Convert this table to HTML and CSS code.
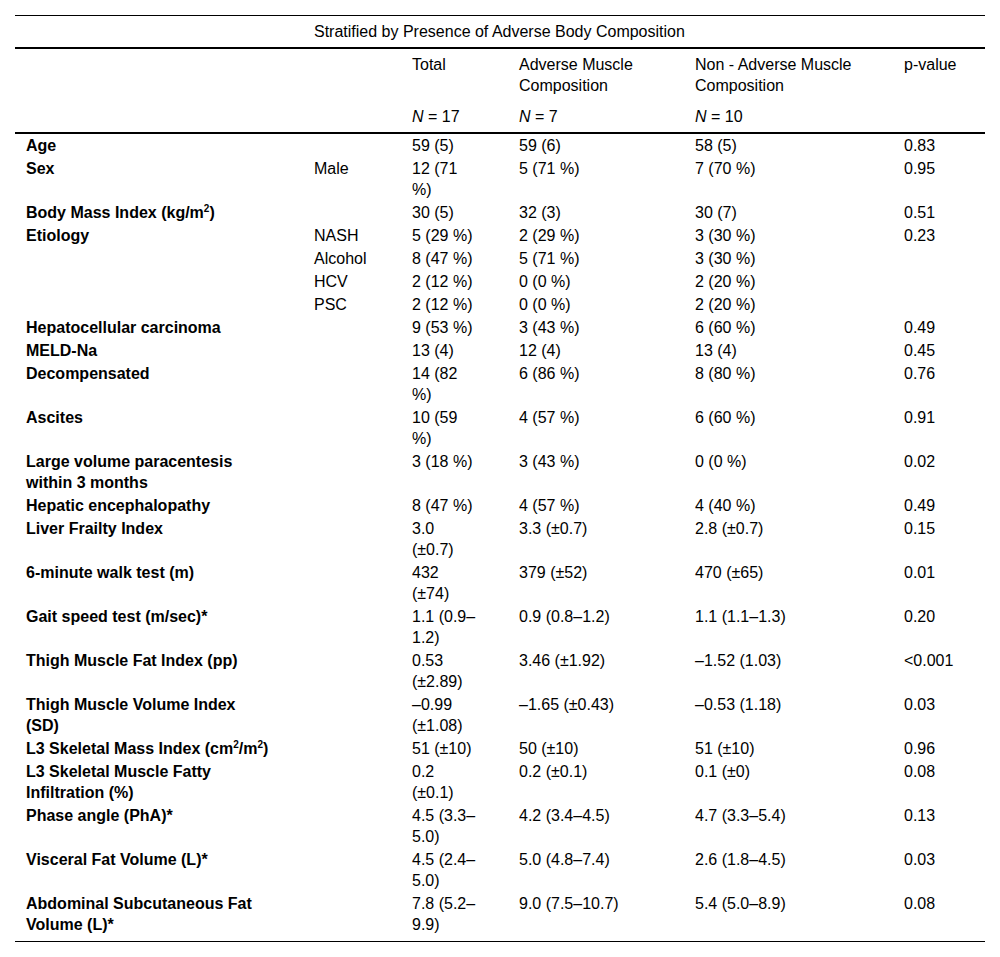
FILE: index.html
```html
<!DOCTYPE html>
<html lang="en">
<head>
<meta charset="utf-8">
<title>Stratified by Presence of Adverse Body Composition</title>
<link rel="stylesheet" href="styles.css">
</head>
<body>
<table class="tbl">
  <colgroup>
    <col class="c1"><col class="c2"><col class="c3"><col class="c4"><col class="c5"><col class="c6">
  </colgroup>
  <thead>
    <tr class="h1">
      <th></th>
      <th colspan="5">Stratified by Presence of Adverse Body Composition</th>
    </tr>
    <tr class="h2">
      <th></th>
      <th></th>
      <th class="tot">Total</th>
      <th>Adverse Muscle Composition</th>
      <th>Non - Adverse Muscle Composition</th>
      <th>p-value</th>
    </tr>
    <tr class="h3">
      <th></th>
      <th></th>
      <th class="tot"><i>N</i> = 17</th>
      <th><i>N</i> = 7</th>
      <th><i>N</i> = 10</th>
      <th></th>
    </tr>
  </thead>
  <tbody>
    <tr><td class="lab">Age</td><td></td><td class="tot">59 (5)</td><td>59 (6)</td><td>58 (5)</td><td>0.83</td></tr>
    <tr><td class="lab">Sex</td><td>Male</td><td class="tot">12 (71 %)</td><td>5 (71 %)</td><td>7 (70 %)</td><td>0.95</td></tr>
    <tr><td class="lab">Body Mass Index (kg/m<sup>2</sup>)</td><td></td><td class="tot">30 (5)</td><td>32 (3)</td><td>30 (7)</td><td>0.51</td></tr>
    <tr><td class="lab">Etiology</td><td>NASH</td><td class="tot">5 (29 %)</td><td>2 (29 %)</td><td>3 (30 %)</td><td>0.23</td></tr>
    <tr><td class="lab"></td><td>Alcohol</td><td class="tot">8 (47 %)</td><td>5 (71 %)</td><td>3 (30 %)</td><td></td></tr>
    <tr><td class="lab"></td><td>HCV</td><td class="tot">2 (12 %)</td><td>0 (0 %)</td><td>2 (20 %)</td><td></td></tr>
    <tr><td class="lab"></td><td>PSC</td><td class="tot">2 (12 %)</td><td>0 (0 %)</td><td>2 (20 %)</td><td></td></tr>
    <tr><td class="lab">Hepatocellular carcinoma</td><td></td><td class="tot">9 (53 %)</td><td>3 (43 %)</td><td>6 (60 %)</td><td>0.49</td></tr>
    <tr><td class="lab">MELD-Na</td><td></td><td class="tot">13 (4)</td><td>12 (4)</td><td>13 (4)</td><td>0.45</td></tr>
    <tr><td class="lab">Decompensated</td><td></td><td class="tot">14 (82 %)</td><td>6 (86 %)</td><td>8 (80 %)</td><td>0.76</td></tr>
    <tr><td class="lab">Ascites</td><td></td><td class="tot">10 (59 %)</td><td>4 (57 %)</td><td>6 (60 %)</td><td>0.91</td></tr>
    <tr><td class="lab">Large volume paracentesis within 3 months</td><td></td><td class="tot">3 (18 %)</td><td>3 (43 %)</td><td>0 (0 %)</td><td>0.02</td></tr>
    <tr><td class="lab">Hepatic encephalopathy</td><td></td><td class="tot">8 (47 %)</td><td>4 (57 %)</td><td>4 (40 %)</td><td>0.49</td></tr>
    <tr><td class="lab">Liver Frailty Index</td><td></td><td class="tot">3.0 (±0.7)</td><td>3.3 (±0.7)</td><td>2.8 (±0.7)</td><td>0.15</td></tr>
    <tr><td class="lab">6-minute walk test (m)</td><td></td><td class="tot">432 (±74)</td><td>379 (±52)</td><td>470 (±65)</td><td>0.01</td></tr>
    <tr><td class="lab">Gait speed test (m/sec)*</td><td></td><td class="tot">1.1 (0.9–1.2)</td><td>0.9 (0.8–1.2)</td><td>1.1 (1.1–1.3)</td><td>0.20</td></tr>
    <tr><td class="lab">Thigh Muscle Fat Index (pp)</td><td></td><td class="tot">0.53 (±2.89)</td><td>3.46 (±1.92)</td><td>–1.52 (1.03)</td><td>&lt;0.001</td></tr>
    <tr><td class="lab">Thigh Muscle Volume Index (SD)</td><td></td><td class="tot">–0.99 (±1.08)</td><td>–1.65 (±0.43)</td><td>–0.53 (1.18)</td><td>0.03</td></tr>
    <tr><td class="lab nowrap">L3 Skeletal Mass Index (cm<sup>2</sup>/m<sup>2</sup>)</td><td></td><td class="tot">51 (±10)</td><td>50 (±10)</td><td>51 (±10)</td><td>0.96</td></tr>
    <tr><td class="lab">L3 Skeletal Muscle Fatty Infiltration (%)</td><td></td><td class="tot">0.2 (±0.1)</td><td>0.2 (±0.1)</td><td>0.1 (±0)</td><td>0.08</td></tr>
    <tr><td class="lab">Phase angle (PhA)*</td><td></td><td class="tot">4.5 (3.3–5.0)</td><td>4.2 (3.4–4.5)</td><td>4.7 (3.3–5.4)</td><td>0.13</td></tr>
    <tr><td class="lab">Visceral Fat Volume (L)*</td><td></td><td class="tot">4.5 (2.4–5.0)</td><td>5.0 (4.8–7.4)</td><td>2.6 (1.8–4.5)</td><td>0.03</td></tr>
    <tr class="last"><td class="lab">Abdominal Subcutaneous Fat Volume (L)*</td><td></td><td class="tot">7.8 (5.2–9.9)</td><td>9.0 (7.5–10.7)</td><td>5.4 (5.0–8.9)</td><td>0.08</td></tr>
  </tbody>
</table>
</body>
</html>
```

FILE: styles.css
```css
html, body {
  margin: 0;
  padding: 0;
  background: #fff;
}

body {
  font-family: "Liberation Sans", Arial, sans-serif;
  font-size: 16px;
  line-height: 21px;
  color: #000;
}

.tbl {
  margin: 15px 15px 0 15px;
  width: 970px;
  table-layout: fixed;
  border-collapse: separate;
  border-spacing: 0;
}

.c1 { width: 288px; }
.c2 { width: 98px; }
.c3 { width: 107px; }
.c4 { width: 176px; }
.c5 { width: 209px; }
.c6 { width: 92px; }

.tbl th,
.tbl td {
  text-align: left;
  vertical-align: top;
  font-weight: normal;
  padding: 1px 10px 1px 11px;
}

.tbl th {
  padding-top: 5px;
  padding-bottom: 5px;
}

.h1 th {
  border-top: 1px solid #000;
  border-bottom: 2px solid #000;
}

.h3 th {
  border-bottom: 2px solid #000;
}

.tbl td.lab {
  font-weight: bold;
  padding-right: 34px;
}

.tbl td.nowrap {
  white-space: nowrap;
}

.tbl .tot {
  padding-right: 30px;
}

.last td {
  padding-bottom: 6px;
  border-bottom: 1px solid #000;
}

sup {
  font-size: 10px;
  line-height: 0;
  vertical-align: 6px;
}
```
